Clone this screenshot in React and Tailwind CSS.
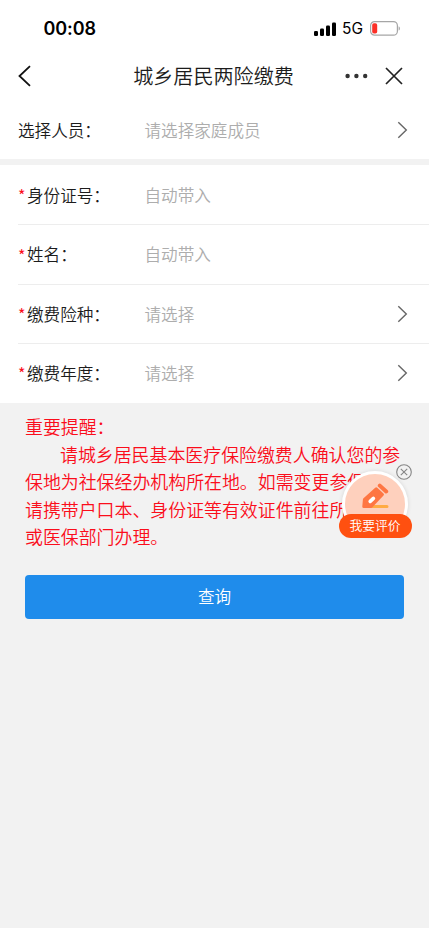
import React from 'react';

const fields = [
  { label: '身份证号：', placeholder: '自动带入' },
  { label: '姓名：', placeholder: '自动带入' },
  { label: '缴费险种：', placeholder: '请选择', select: true },
  { label: '缴费年度：', placeholder: '请选择', select: true },
];

export default function App() {
  return (
    <div className="relative min-h-screen w-full overflow-hidden bg-[#f2f2f2] font-['Noto_Sans_CJK_SC',sans-serif] font-[350] text-[#1c1c1c]">
      <div className="bg-white">
        <StatusBar />
        <NavBar />
        <div className="flex h-[58px] items-center pl-[18px] pr-[21px] text-[16.6px]">
          <span className="w-[126.5px]">选择人员：</span>
          <span className="flex-1 text-[#adadad]">请选择家庭成员</span>
          <Chevron />
        </div>
      </div>

      <div className="mt-[6px] bg-white pl-[18px]">
        {fields.map((field, i) => (
          <FieldRow key={field.label} {...field} first={i === 0} />
        ))}
      </div>

      <div className="relative px-[25px] pt-[10.4px]">
        <div className="w-[380px] text-[17.92px] leading-[27.6px] text-[#fb0d1b]">
          <p>重要提醒：</p>
          <p className="whitespace-nowrap">
            <span className="ml-[35px]">请城乡居民基本医疗保险缴费人确认您的参</span>
            <br />
            保地为社保经办机构所在地。如需变更参保地，
            <br />
            请携带户口本、身份证等有效证件前往所属社保
            <br />
            或医保部门办理。
          </p>
        </div>
        <button className="mt-[24px] block h-[44px] w-[379px] rounded-[4px] bg-[#1f8ceb] pb-px text-[16.6px] text-white">
          查询
        </button>
        <FeedbackBadge />
      </div>
    </div>
  );
}

const StatusBar = () => (
  <div className="flex h-[50px] items-center pl-[43.5px] pr-[29px] pt-[7px] font-['Inter',sans-serif] text-black">
    <span className="flex-1 text-[18px] font-semibold leading-none tracking-[-0.1px]">00:08</span>
    <svg className="mr-[6px]" width="22" height="14" viewBox="0 0 22 14">
      <rect x="0" y="9" width="4" height="5" rx="1.2" />
      <rect x="6" y="6.5" width="4" height="7.5" rx="1.2" />
      <rect x="12" y="3.5" width="4" height="10.5" rx="1.2" />
      <rect x="18" y="0.5" width="4" height="13.5" rx="1.2" />
    </svg>
    <span className="mr-[7px] text-[15.5px] font-normal leading-none">5G</span>
    <svg width="30" height="15" viewBox="0 0 30 15">
      <rect x="0.6" y="0.6" width="26.8" height="13.6" rx="4" fill="none" stroke="#a6a6a6" strokeWidth="1.2" />
      <rect x="2.2" y="2.3" width="5" height="10.2" rx="1.8" fill="#fc3028" />
      <path d="M28.6 5.2c1 .5 1.3 1.3 1.3 2.2s-.3 1.7-1.3 2.2z" fill="#a6a6a6" />
    </svg>
  </div>
);

const NavBar = () => (
  <div className="grid h-[51px] grid-cols-[1fr_auto_1fr] items-center pl-[18px] pr-[26px]">
    <svg width="13" height="22" viewBox="0 0 13 22" fill="none" stroke="#111" strokeWidth="1.8">
      <path d="M12 1.2 1.5 11 12 20.8" />
    </svg>
    <h1 className="relative left-[3px] top-[0.5px] text-[20.1px] leading-none">城乡居民两险缴费</h1>
    <div className="flex items-center justify-end gap-[17px]">
      <svg width="23" height="6" viewBox="0 0 23 6" fill="#333">
        <circle cx="2.6" cy="3" r="2.2" />
        <circle cx="11.4" cy="3" r="2.2" />
        <circle cx="20.2" cy="3" r="2.2" />
      </svg>
      <svg width="18" height="18" viewBox="0 0 18 18" fill="none" stroke="#222" strokeWidth="1.7">
        <path d="m1 1 16 16M17 1 1 17" />
      </svg>
    </div>
  </div>
);

const FieldRow = ({ label, placeholder, select, first }) => (
  <div
    className={`flex h-[59.4px] items-center pr-[21px] text-[16.6px] ${first ? 'pt-px' : 'border-t border-[#ededed]'}`}
  >
    <span className="w-[9px] text-[16px] font-normal text-[#fb0d1b]">*</span>
    <span className="w-[117.5px]">{label}</span>
    <span className="flex-1 text-[#adadad]">{placeholder}</span>
    {select && <Chevron />}
  </div>
);

const Chevron = () => (
  <svg width="11" height="18" viewBox="0 0 11 18" fill="none" stroke="#666" strokeWidth="1.4">
    <path d="m1.3 1.2 8 7.8-8 7.8" />
  </svg>
);

// Floating shortcut that sits over the notice text
const FeedbackBadge = () => (
  <div className="absolute right-[17px] top-[60px] h-[76px] w-[74px]">
    <div className="absolute left-[4px] top-[8px] h-[66px] w-[66px] rounded-full border-[3px] border-white bg-[#fed0bd] shadow-[0_0_4px_rgba(0,0,0,0.12)]">
      <svg className="absolute left-[17px] top-[9px]" width="28" height="28" viewBox="0 0 28 28">
        <path d="M10 22h15a1.5 1.5 0 0 1 0 3H8z" fill="#ffab43" />
        <path
          d="M13.2 4.7a1.500 1.500 0 0 1 2.100 0l6.200 5.800a1.500 1.500 0 0 1 0 2.100L10.400 24.300a2 2 0 0 1-1.500.7H1.800A1.500 1.500 0 0 1 .3 23.400l.6-6.800a2 2 0 0 1 .6-1.300z"
          fill="#fe7643"
        />
        <path d="m8.200 18.400 3.200-3" stroke="#fff" strokeWidth="3.600" strokeLinecap="round" />
        <path d="m17.800 2.600 6.400 5.900" stroke="#fe7643" strokeWidth="4" strokeLinecap="round" />
      </svg>
    </div>
    <div className="absolute left-[0.5px] top-[51px] flex h-[24px] w-[73px] items-center justify-center rounded-full bg-[#ff5010] text-[12.8px] leading-none text-white">
      我要评价
    </div>
    <svg className="absolute left-[58px] top-[1px]" width="16" height="16" viewBox="0 0 16 16" fill="none" stroke="#858585" strokeWidth="1.1">
      <circle cx="8" cy="8" r="7.3" />
      <path d="m4.8 4.8 6.4 6.4M11.2 4.8l-6.400 6.400" />
    </svg>
  </div>
);
